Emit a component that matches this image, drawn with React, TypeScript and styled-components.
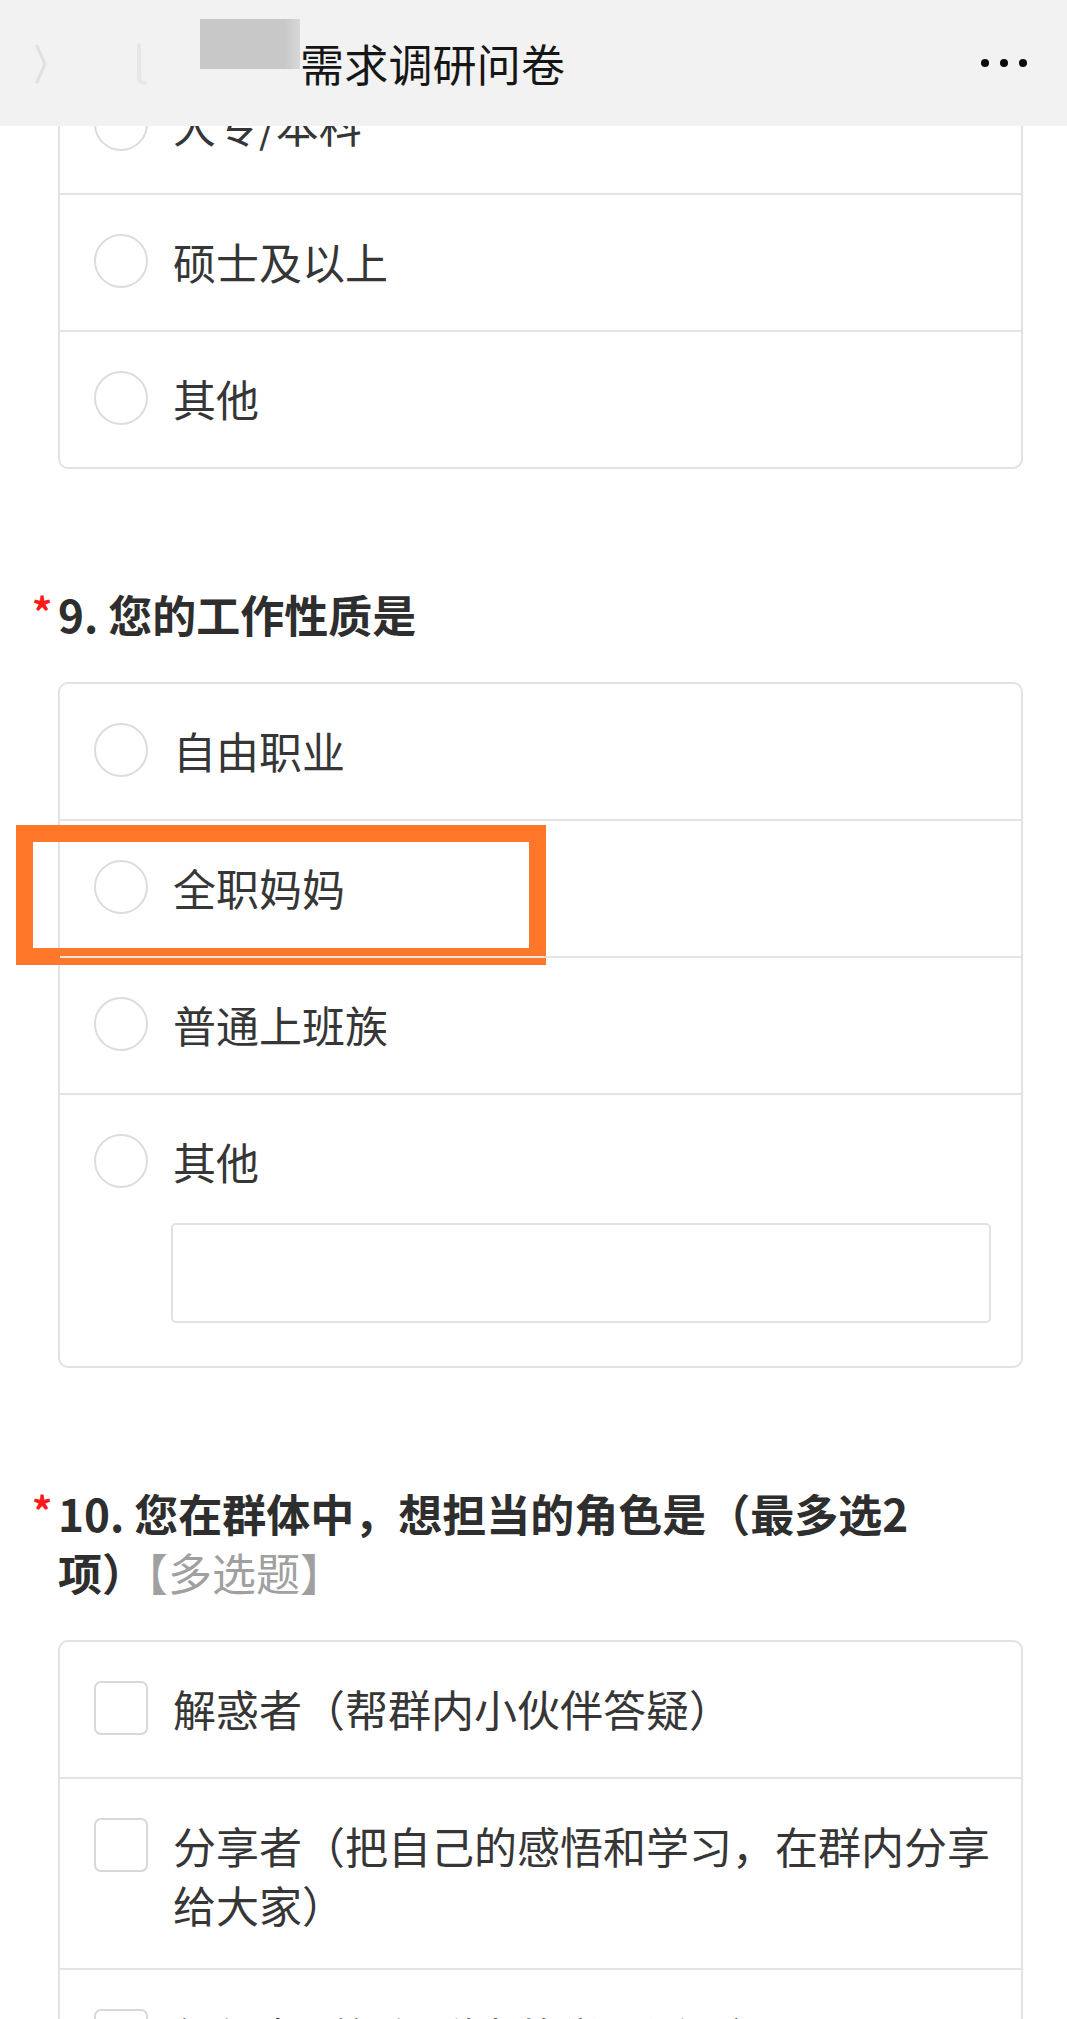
import styled, { createGlobalStyle } from "styled-components";

const GlobalStyle = createGlobalStyle`
  html, body {
    margin: 0;
    padding: 0;
    background: #ffffff;
  }
  body {
    font-family: "Noto Sans CJK SC", "Noto Sans", sans-serif;
    color: #333333;
  }
  * {
    box-sizing: border-box;
  }
`;

const Page = styled.div`
  width: 1067px;
  height: 2019px;
  overflow: hidden;
  background: #ffffff;
`;

const NavBar = styled.header`
  position: fixed;
  top: 0;
  left: 0;
  width: 1067px;
  height: 126px;
  background: #f2f2f2;
  display: flex;
  align-items: center;
  padding: 0 40px 0 34px;
  z-index: 10;
`;

const FaintMark = styled.svg<{ gap: number }>`
  flex-shrink: 0;
  margin-left: ${({ gap }) => gap}px;
  margin-top: 2px;
`;

const Redacted = styled.div`
  width: 100px;
  height: 50px;
  background: linear-gradient(90deg, #c8c8c8 0%, #c8c8c8 85%, #d8d8d8 100%);
  margin-left: 52px;
  margin-bottom: 38px;
  flex-shrink: 0;
`;

const NavTitle = styled.h1`
  margin: 0;
  font-size: 44px;
  font-weight: 400;
  color: #161616;
  line-height: 1;
  letter-spacing: 0.2px;
`;

const MoreDots = styled.div`
  margin-left: auto;
  display: flex;
  gap: 11px;
`;

const Dot = styled.span`
  width: 8px;
  height: 8px;
  border-radius: 50%;
  background: #0a0a0a;
`;

const Content = styled.main`
  padding: 56px 44px 0 58px;
`;

const Section = styled.section`
  margin-top: 116px;
`;

const QuestionTitle = styled.h2`
  display: flex;
  margin: 0 0 38px -28px;
  font-size: 44px;
  font-weight: 700;
  line-height: 59px;
  color: #2e2e2e;
`;

const Required = styled.span`
  width: 28px;
  flex-shrink: 0;
  color: #ff1a1a;
  font-size: 40px;
  font-weight: 700;
  line-height: 52px;
  padding-left: 2px;
`;

const TitleText = styled.span`
  max-width: 862px;
`;

const TypeHint = styled.span`
  color: #a0a0a0;
  font-weight: 400;
`;

const Card = styled.div`
  border: 2px solid #e2e2e2;
  border-radius: 10px;
  background: #ffffff;
`;

const Row = styled.div`
  position: relative;
  display: flex;
  align-items: flex-start;
  padding: 39px 26px 34px 34px;

  & + & {
    border-top: 2px solid #e4e4e4;
  }
`;

const Radio = styled.span`
  width: 54px;
  height: 54px;
  margin-bottom: 8px;
  flex-shrink: 0;
  border: 2px solid #dcdcdc;
  border-radius: 50%;
  background: #ffffff;
`;

const Checkbox = styled.span`
  width: 54px;
  height: 54px;
  margin-bottom: 8px;
  flex-shrink: 0;
  border: 2px solid #d8d8d8;
  border-radius: 7px;
  background: #ffffff;
`;

const OptionBody = styled.div`
  flex: 1;
  margin-left: 25px;
  display: flex;
  flex-direction: column;
`;

const Label = styled.span`
  margin-top: -2px;
  font-size: 43px;
  line-height: 59px;
  color: #363636;
`;

const OtherInput = styled.div`
  height: 100px;
  margin: 32px 4px 9px -2px;
  border: 2px solid #e2e2e2;
  border-radius: 5px;
  background: #ffffff;
`;

const Highlight = styled.div`
  position: absolute;
  left: -44px;
  top: 4px;
  width: 530px;
  height: 140px;
  border: 17px solid #ff782a;
  pointer-events: none;
`;

type Option = {
  label: string;
  other?: boolean;
  marked?: boolean;
};

const OptionRow = ({ option, multi }: { option: Option; multi?: boolean }) => (
  <Row>
    {multi ? <Checkbox /> : <Radio />}
    <OptionBody>
      <Label>{option.label}</Label>
      {option.other && <OtherInput />}
    </OptionBody>
    {option.marked && <Highlight />}
  </Row>
);

const educationOptions: Option[] = [
  { label: "大专/本科" },
  { label: "硕士及以上" },
  { label: "其他" },
];

const jobOptions: Option[] = [
  { label: "自由职业" },
  { label: "全职妈妈", marked: true },
  { label: "普通上班族" },
  { label: "其他", other: true },
];

const roleOptions: Option[] = [
  { label: "解惑者（帮群内小伙伴答疑）" },
  { label: "分享者（把自己的感悟和学习，在群内分享给大家）" },
  { label: "组织者（组织群内的学习活动）" },
];

export default function App() {
  return (
    <Page>
      <GlobalStyle />
      <NavBar>
        <FaintMark gap={0} width="14" height="40" viewBox="0 0 14 40">
          <polyline
            points="3,2 11,20 3,38"
            fill="none"
            stroke="#e0e0e0"
            strokeWidth="3"
            strokeLinecap="round"
          />
        </FaintMark>
        <FaintMark gap={86} width="14" height="42" viewBox="0 0 14 42">
          <path
            d="M5 2 V34 Q5 40 11 40"
            fill="none"
            stroke="#e7e7e7"
            strokeWidth="4"
            strokeLinecap="round"
          />
        </FaintMark>
        <Redacted />
        <NavTitle>需求调研问卷</NavTitle>
        <MoreDots>
          <Dot />
          <Dot />
          <Dot />
        </MoreDots>
      </NavBar>

      <Content>
        <Card>
          {educationOptions.map((o) => (
            <OptionRow key={o.label} option={o} />
          ))}
        </Card>

        <Section>
          <QuestionTitle>
            <Required>*</Required>
            <TitleText>9. 您的工作性质是</TitleText>
          </QuestionTitle>
          <Card>
            {jobOptions.map((o) => (
              <OptionRow key={o.label} option={o} />
            ))}
          </Card>
        </Section>

        <Section>
          <QuestionTitle>
            <Required>*</Required>
            <TitleText>
              10. 您在群体中，想担当的角色是（最多选2
              <wbr />
              项）
              <TypeHint>【多选题】</TypeHint>
            </TitleText>
          </QuestionTitle>
          <Card>
            {roleOptions.map((o) => (
              <OptionRow key={o.label} option={o} multi />
            ))}
          </Card>
        </Section>
      </Content>
    </Page>
  );
}
